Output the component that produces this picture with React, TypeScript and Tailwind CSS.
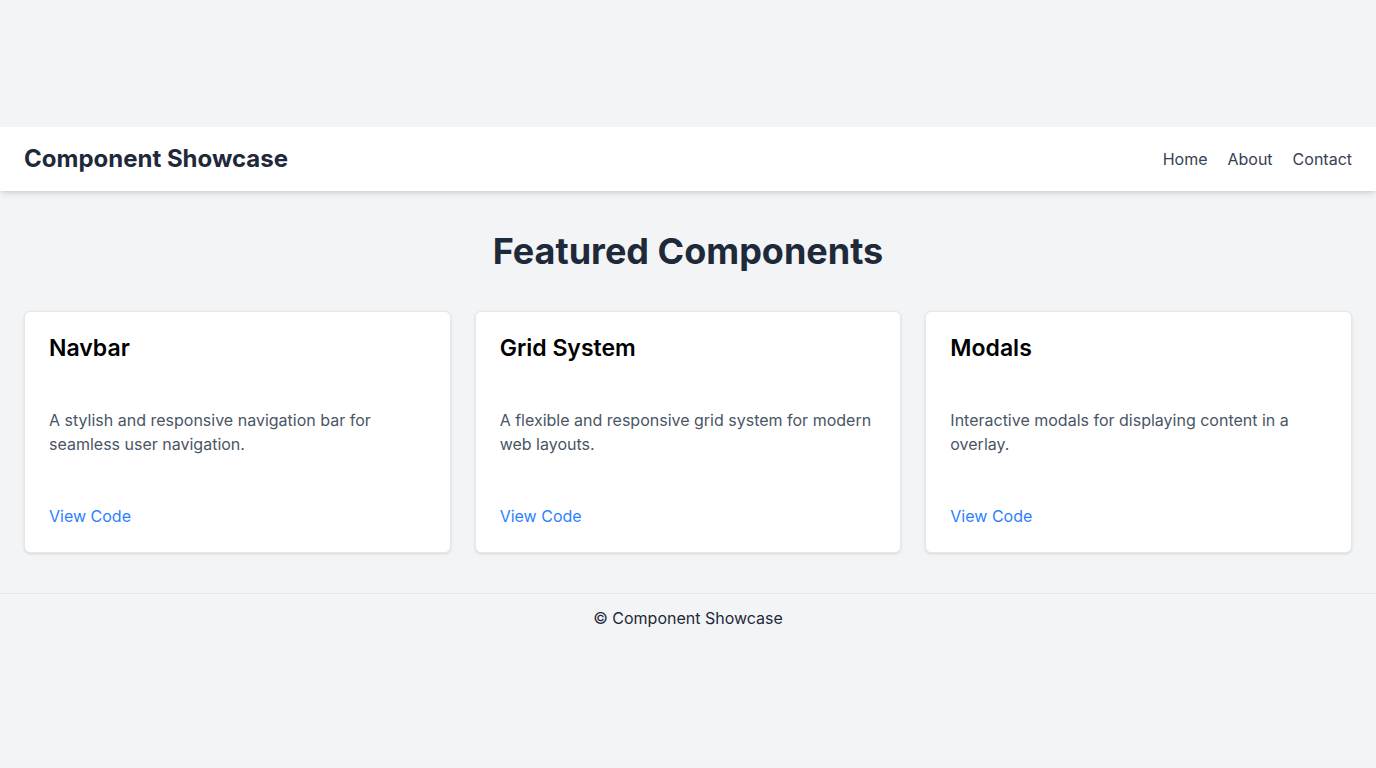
const cards = [
  {
    title: 'Navbar',
    text: 'A stylish and responsive navigation bar for seamless user navigation.',
  },
  {
    title: 'Grid System',
    text: 'A flexible and responsive grid system for modern web layouts.',
  },
  {
    title: 'Modals',
    text: 'Interactive modals for displaying content in a overlay.',
  },
];

export default function App() {
  return (
    <div className="min-h-screen bg-gray-100 flex flex-col justify-center font-['Inter',sans-serif]">
      {/* Top bar */}
      <header className="bg-white shadow-md px-6 py-4 flex items-center justify-between">
        <h1 className="text-2xl leading-8 font-bold text-gray-800">Component Showcase</h1>
        <nav className="flex items-center gap-5 text-base text-gray-700">
          <a href="#">Home</a>
          <a href="#">About</a>
          <a href="#">Contact</a>
        </nav>
      </header>

      <main className="px-6 pt-10 pb-10">
        <h2 className="text-4xl leading-10 font-bold text-gray-800 text-center mb-10">
          Featured Components
        </h2>
        <div className="grid grid-cols-3 gap-6">
          {cards.map((card) => (
            <div
              key={card.title}
              className="bg-white rounded-md border border-gray-200 shadow-sm h-[242px] flex flex-col pt-5 px-6 pb-6"
            >
              <h3 className="text-[23px] leading-8 font-semibold text-black">{card.title}</h3>
              <p className="mt-[44px] text-base leading-6 text-gray-600">{card.text}</p>
              <a href="#" className="mt-auto text-base leading-6 text-blue-500">
                View Code
              </a>
            </div>
          ))}
        </div>
      </main>

      <footer className="border-t border-gray-200 py-3 text-center text-base leading-6 text-gray-800">
        © Component Showcase
      </footer>
    </div>
  );
}
